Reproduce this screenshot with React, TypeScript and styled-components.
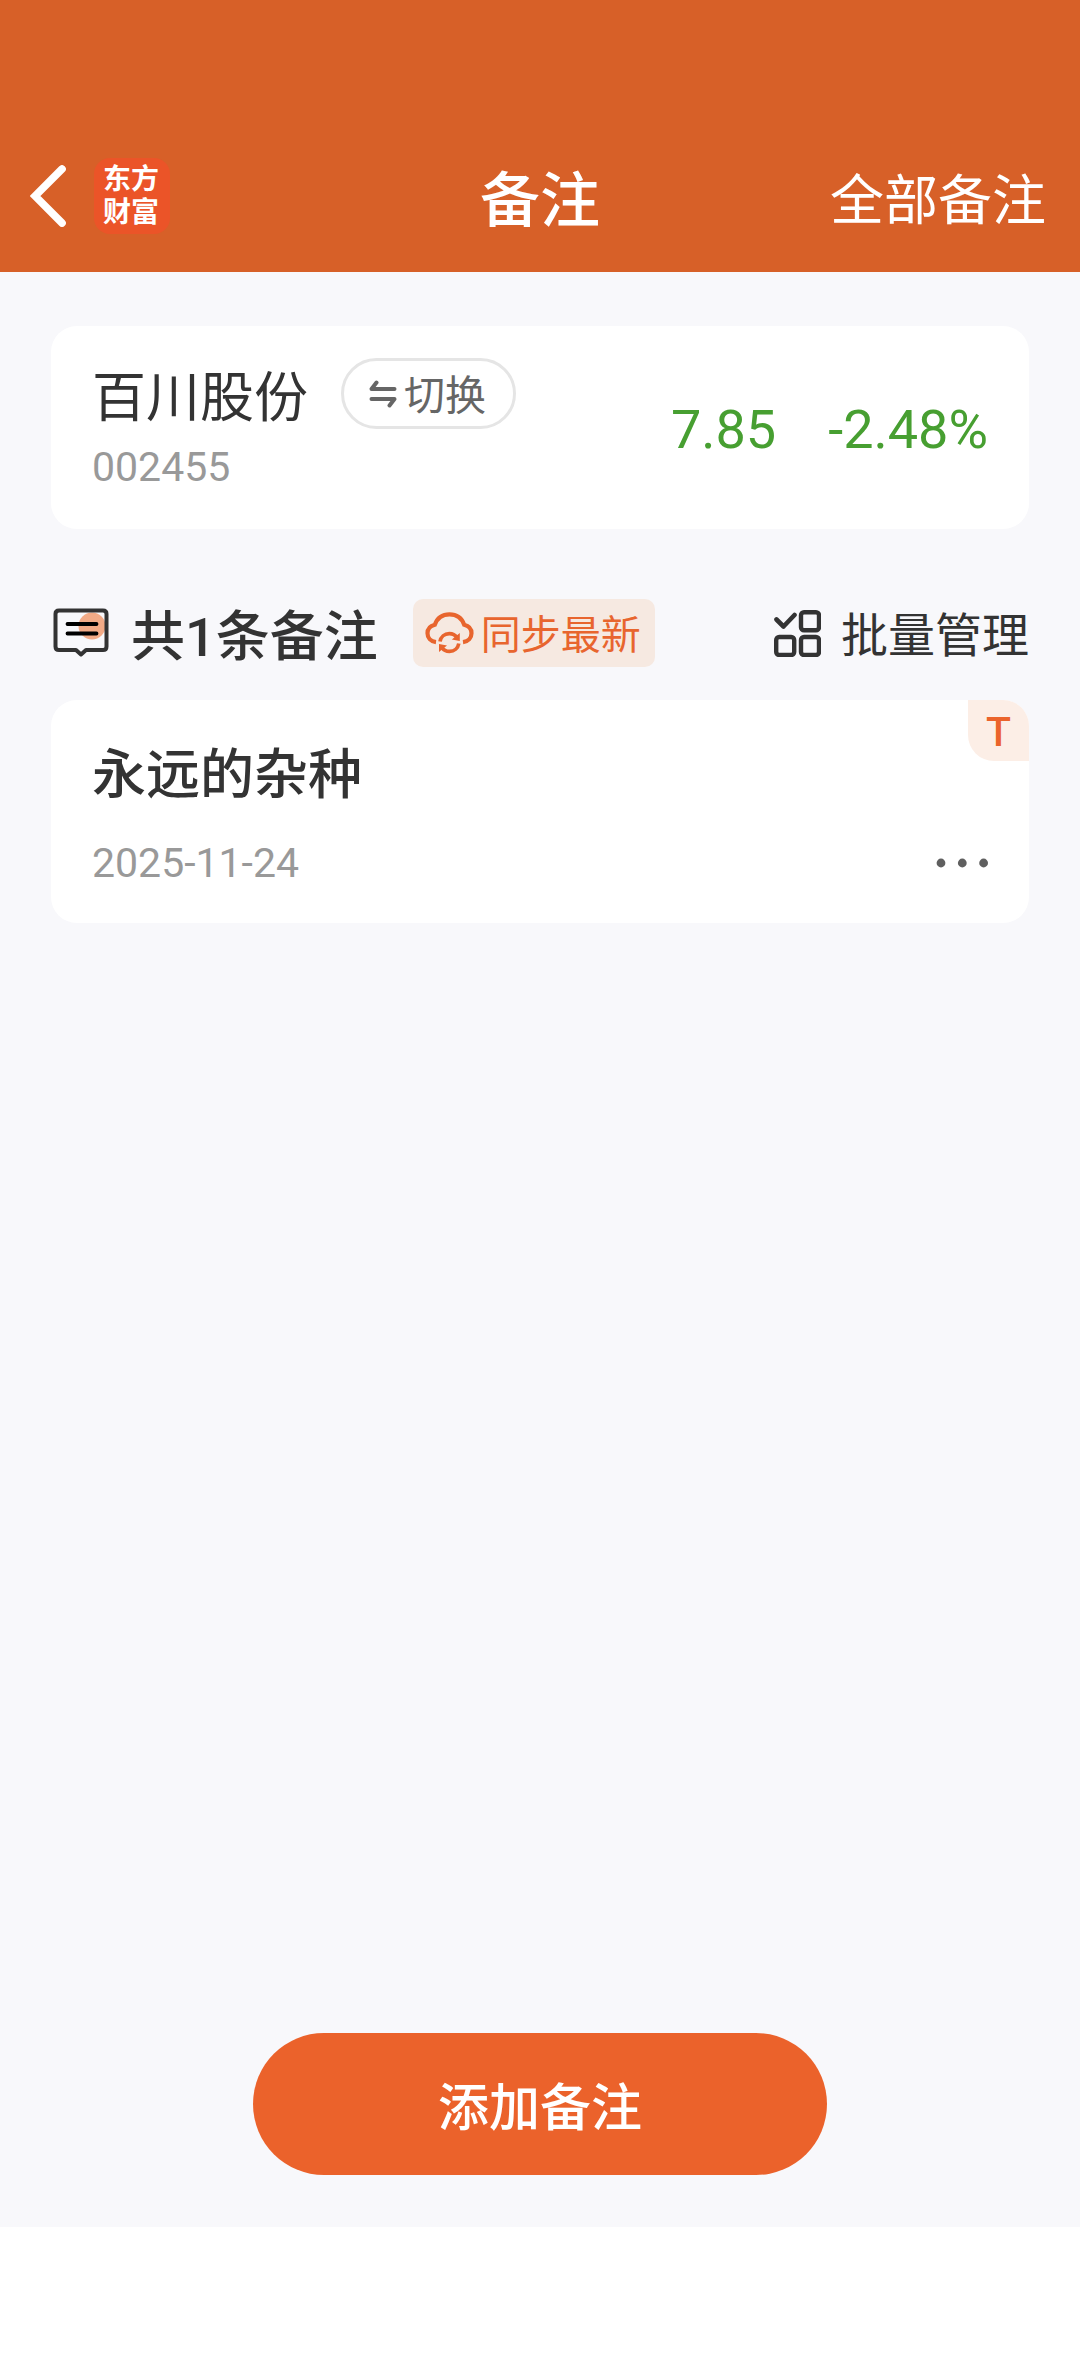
import React from 'react';
import styled, { createGlobalStyle } from 'styled-components';

const GlobalStyle = createGlobalStyle`
  * { box-sizing: border-box; }
  body {
    margin: 0;
    background: #ffffff;
    color: #333333;
    font-family: Roboto, "Noto Sans CJK SC", sans-serif;
  }
  button {
    margin: 0;
    padding: 0;
    border: 0;
    background: none;
    color: inherit;
    font: inherit;
    cursor: pointer;
  }
  h1, h2, h3, p { margin: 0; }
  svg { display: block; flex: none; }
`;

const Page = styled.div`
  display: flex;
  flex-direction: column;
  min-height: 100vh;
`;

const Header = styled.header`
  display: grid;
  grid-template-columns: 1fr auto 1fr;
  align-items: center;
  height: 272px;
  padding: 120px 30px 0;
  background: #d76028;
  color: #ffffff;
`;

const Brand = styled.div`
  display: flex;
  align-items: center;
  gap: 28px;
`;

const Logo = styled.div`
  display: grid;
  align-content: center;
  justify-content: center;
  width: 76px;
  height: 76px;
  padding-right: 2px;
  border-radius: 16px;
  background: #eb5428;
  font-size: 28px;
  font-weight: 700;
  line-height: 33px;
`;

const PageTitle = styled.h1`
  padding-top: 12px;
  font-size: 60px;
  font-weight: 500;
  line-height: 72px;
`;

const HeaderLink = styled.a`
  justify-self: end;
  padding: 12px 4px 0 0;
  color: inherit;
  font-size: 54px;
  line-height: 72px;
  text-decoration: none;
`;

const Main = styled.main`
  display: flex;
  flex: 1;
  flex-direction: column;
  padding: 54px 51px 52px;
  background: #f8f8fb;
`;

const Card = styled.section`
  border-radius: 26px;
  background: #ffffff;
`;

const StockCard = styled(Card)`
  display: flex;
  justify-content: space-between;
  padding: 32px 41px 34px;
`;

const StockInfo = styled.div`
  display: grid;
  gap: 10px;
`;

const NameRow = styled.div`
  display: flex;
  align-items: center;
  gap: 33px;
  height: 71px;
`;

const StockName = styled.h2`
  padding-top: 10px;
  font-size: 54px;
  font-weight: 400;
  line-height: 60px;
`;

const SwitchButton = styled.button`
  display: flex;
  align-items: center;
  gap: 7px;
  height: 71px;
  padding: 0 27px 0 25px;
  border: 3px solid #e5e5e5;
  border-radius: 36px;
  color: #666666;
  font-size: 41px;
`;

const Muted = styled.p`
  color: #999999;
  font-size: 41px;
  line-height: 56px;
`;

const Quote = styled.div`
  display: flex;
  align-self: flex-end;
  gap: 52px;
  color: #479f31;
  font-size: 54px;
  line-height: 130px;
`;

const Toolbar = styled.div`
  display: flex;
  align-items: center;
  padding: 70px 0 33px 2px;
`;

const Count = styled.h2`
  padding: 10px 0 0 22px;
  font-size: 54px;
  font-weight: 500;
  line-height: 58px;
`;

const SyncButton = styled.button`
  display: flex;
  align-items: center;
  gap: 7px;
  height: 68px;
  margin-left: 35px;
  padding: 0 14px 0 12px;
  border-radius: 10px;
  background: #f6e9e1;
  color: #e8652e;
  font-size: 40px;
`;

const ManageButton = styled.button`
  display: flex;
  align-items: center;
  gap: 20px;
  margin-left: auto;
  font-size: 47px;
`;

const Label = styled.span`
  padding-top: 5px;
  line-height: 56px;
`;

const NoteCard = styled(Card)`
  position: relative;
  display: grid;
  gap: 30px;
  padding: 44px 40px 36px 41px;
`;

const NoteTitle = styled.h3`
  font-size: 54px;
  font-weight: 500;
  line-height: 64px;
`;

const NoteFooter = styled.div`
  display: flex;
  align-items: center;
  justify-content: space-between;
  height: 49px;
`;

const Tag = styled.span`
  position: absolute;
  top: 0;
  right: 0;
  width: 61px;
  height: 61px;
  border-radius: 0 26px;
  background: #fceee6;
  color: #eb642b;
  font-size: 41px;
  font-weight: 500;
  line-height: 64px;
  text-align: center;
`;

const AddButton = styled.button`
  align-self: center;
  width: 574px;
  max-width: 100%;
  height: 142px;
  margin-top: auto;
  border-radius: 71px;
  background: #eb622b;
  color: #ffffff;
  font-size: 51px;
  font-weight: 500;
`;

const BottomInset = styled.footer`
  height: 149px;
  background: #ffffff;
`;

const BackIcon = () => (
  <svg width="36" height="62" viewBox="0 0 36 62" fill="none" aria-hidden="true">
    <path d="M32 4 5 31 32 58" stroke="#fff" strokeWidth="7.600" strokeLinecap="round" />
  </svg>
);

const SwitchIcon = () => (
  <svg width="28" height="28" viewBox="0 0 28 28" fill="none" stroke="#666" strokeWidth="4" strokeLinecap="round" strokeLinejoin="round" aria-hidden="true">
    <path d="M25.500 9H2.500L7.500 2.500M2.500 19h23L20.500 25.500" />
  </svg>
);

const NoteIcon = () => (
  <svg width="56" height="50" viewBox="0 0 56 50" fill="none" strokeLinejoin="round" strokeLinecap="round" aria-hidden="true">
    <circle cx="39" cy="18" r="13.500" fill="#f2aa86" />
    <path d="M6 2.500h44q3.500 0 3.500 3.500v32.500q0 3.500-3.500 3.500H33l-5 4.500-5-4.500H6q-3.500 0-3.500-3.500V6Q2.500 2.500 6 2.500Z" stroke="#333" strokeWidth="4" />
    <path d="M14.500 16h29M14.500 25.500h29" stroke="#000" strokeWidth="3.800" />
  </svg>
);

const SyncIcon = () => (
  <svg width="49" height="42" viewBox="0 0 49 42" fill="none" stroke="#e8652e" strokeWidth="4.200" aria-hidden="true">
    <path d="M11 30.200C5.500 29.500 2.500 25.800 2.500 21.300c0-4.500 3-7.600 7.300-8.600C12.200 6 17.500 2.300 24.500 2.300s12.300 3.700 14.700 10.400c4.300 1 7.300 4.100 7.300 8.600 0 4.500-3 8.200-8.500 8.900" />
    <path d="M15 29.500c.8-4.700 4.500-7.900 9.300-7.900 3.300 0 6 1.400 7.700 3.900M33.800 31.500c-.8 4.700-4.500 7.900-9.300 7.900-3.300 0-6-1.400-7.700-3.900" strokeWidth="3.700" />
    <path d="M34.800 21v8l-8-1.500ZM14 40v-8l8 1.500Z" fill="#e8652e" stroke="none" />
  </svg>
);

const ManageIcon = () => (
  <svg width="47" height="47" viewBox="0 0 47 47" fill="none" stroke="#333" strokeWidth="4.400" strokeLinecap="round" strokeLinejoin="round" aria-hidden="true">
    <path d="m2.500 9.500 7 7L20.500 5" strokeWidth="4.600" />
    <rect x="27" y="2.200" width="18" height="18" rx="3" />
    <rect x="2.200" y="27" width="18" height="18" rx="3" />
    <rect x="27" y="27" width="18" height="18" rx="3" />
  </svg>
);

const MoreIcon = () => (
  <svg width="54" height="10" viewBox="0 0 54 10" fill="#5f5f5f" aria-hidden="true">
    <circle cx="6" cy="5" r="4.400" />
    <circle cx="27.300" cy="5" r="4.400" />
    <circle cx="48.600" cy="5" r="4.400" />
  </svg>
);

export default function App() {
  return (
    <Page>
      <GlobalStyle />
      <Header>
        <Brand>
          <button type="button" aria-label="返回"><BackIcon /></button>
          <Logo><span>东方</span><span>财富</span></Logo>
        </Brand>
        <PageTitle>备注</PageTitle>
        <HeaderLink href="#all">全部备注</HeaderLink>
      </Header>
      <Main>
        <StockCard>
          <StockInfo>
            <NameRow>
              <StockName>百川股份</StockName>
              <SwitchButton type="button"><SwitchIcon /><Label>切换</Label></SwitchButton>
            </NameRow>
            <Muted>002455</Muted>
          </StockInfo>
          <Quote><span>7.85</span><span>-2.48%</span></Quote>
        </StockCard>
        <Toolbar>
          <NoteIcon />
          <Count>共1条备注</Count>
          <SyncButton type="button"><SyncIcon /><Label>同步最新</Label></SyncButton>
          <ManageButton type="button"><ManageIcon /><Label>批量管理</Label></ManageButton>
        </Toolbar>
        <NoteCard>
          <Tag>T</Tag>
          <NoteTitle>永远的杂种</NoteTitle>
          <NoteFooter>
            <Muted as="time" dateTime="2025-11-24">2025-11-24</Muted>
            <button type="button" aria-label="更多"><MoreIcon /></button>
          </NoteFooter>
        </NoteCard>
        <AddButton type="button">添加备注</AddButton>
      </Main>
      <BottomInset />
    </Page>
  );
}
